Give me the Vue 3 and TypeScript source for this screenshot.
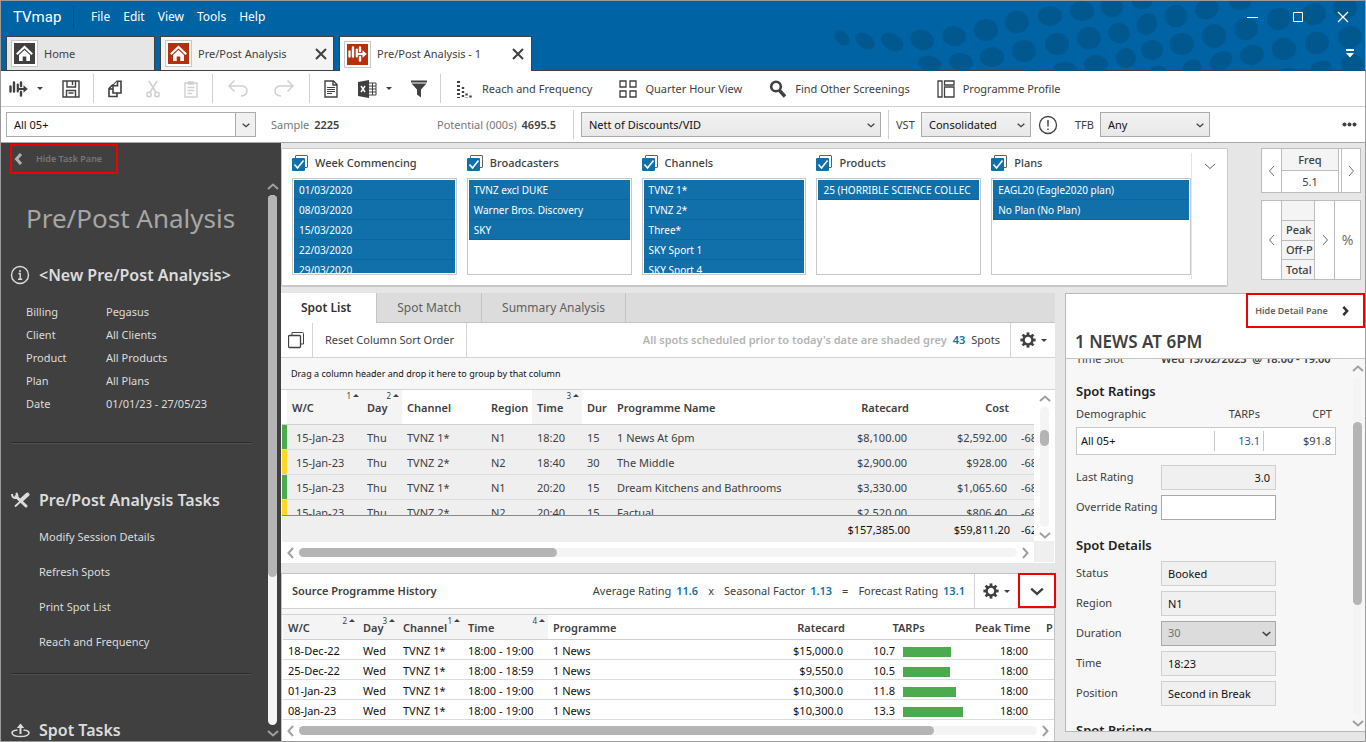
<script setup lang="ts">
import { h, ref } from 'vue'

type Dir = 'up' | 'down' | 'left' | 'right'

const chevronPaths: Record<Dir, string> = {
  up: 'M1 8 L6 3.5 L11 8',
  down: 'M1 4 L6 8.5 L11 4',
  left: 'M8 1 L3.5 6 L8 11',
  right: 'M4 1 L8.5 6 L4 11',
}

const Chevron = (props: { dir: Dir; size?: number; weight?: number }) =>
  h('svg', { width: props.size ?? 12, height: props.size ?? 12, viewBox: '0 0 12 12', 'aria-hidden': 'true' }, [
    h('path', { d: chevronPaths[props.dir], fill: 'none', stroke: 'currentColor', 'stroke-width': props.weight ?? 2 }),
  ])
Chevron.props = ['dir', 'size', 'weight']

const Gear = () =>
  h('svg', { width: 16, height: 16, viewBox: '-8 -8 16 16', 'aria-hidden': 'true' }, [
    h('circle', { r: 4.4, fill: 'none', stroke: 'currentColor', 'stroke-width': 2.4 }),
    ...[0, 45, 90, 135, 180, 225, 270, 315].map((a) =>
      h('rect', { x: -1.4, y: -7.6, width: 2.8, height: 3, fill: 'currentColor', transform: `rotate(${a})` }),
    ),
  ])

const SpotsIcon = () =>
  h('svg', { width: 19, height: 18, viewBox: '0 0 19 18', fill: 'none', stroke: 'currentColor', 'aria-hidden': 'true' }, [
    h('path', { d: 'M1.5 6.5 V11.5 M5 2.5 V11.5', 'stroke-width': 2.4, 'stroke-linecap': 'round' }),
    h('path', { d: 'M8.8 4.5 V11.5', 'stroke-width': 2.2, 'stroke-linecap': 'round' }),
    h('path', { d: 'M12 2.5 V6 M12 12 V15.5', 'stroke-width': 2.4, 'stroke-linecap': 'round' }),
    h('path', { d: 'M8.5 9 H16', 'stroke-width': 2.2 }),
    h('path', { d: 'M14.5 5.2 L18.8 9 L14.5 12.8 Z', fill: 'currentColor', stroke: 'none' }),
  ])

const HomeIcon = () =>
  h('svg', { width: 19, height: 19, viewBox: '0 0 19 19', 'aria-hidden': 'true' }, [
    h('path', { d: 'M1.8 10.2 L9.5 3 L17.2 10.2', fill: 'none', stroke: '#fff', 'stroke-width': 2.2 }),
    h('path', { d: 'M4 11 L9.5 6 L15 11 V17 H11.3 V12.5 H7.7 V17 H4 Z', fill: '#fff' }),
  ])

const menus = ['File', 'Edit', 'View', 'Tools', 'Help']

const dots: number[][] = [
  [843, 37, 9, 6, 45], [866, 40, 11, 7, 35], [893, 41, 12, 8, 30], [923, 39, 12, 10, 20], [955, 35, 12, 10, 10],
  [987, 29, 12, 11, 0], [1018, 21, 12, 11, 0], [1051, 15, 12, 10, 0], [1083, 10, 12, 10, 0], [1113, 6, 11, 10, 20],
  [1143, 1, 10, 7, 0], [931, 63, 12, 8, 15], [962, 61, 12, 9, 10], [993, 56, 12, 10, 0], [1025, 50, 12, 11, 0],
  [1058, 43, 12, 11, 0], [1090, 37, 12, 11, 0], [1120, 32, 11, 10, 20], [1148, 23, 10, 11, 30], [1177, 15, 11, 11, 0],
  [1208, 8, 12, 10, -20], [1241, 1, 11, 8, 0], [1066, 69, 12, 8, 0], [1097, 64, 12, 10, 0], [1127, 57, 10, 10, 0],
  [1153, 49, 11, 10, 0], [1183, 43, 12, 11, 0], [1215, 35, 12, 12, 0], [1247, 28, 12, 11, -15], [1280, 18, 12, 11, -15],
  [1315, 13, 12, 11, -15], [1346, 7, 12, 11, 0], [1159, 70, 9, 5, 0], [1193, 67, 10, 8, -30], [1222, 60, 12, 9, -30],
  [1253, 54, 12, 10, -15], [1285, 48, 12, 11, 0], [1318, 42, 12, 11, -15], [1351, 36, 12, 11, -15],
  [1322, 68, 11, 8, -15], [1353, 63, 11, 10, 0], [1290, 71, 10, 4, 0], [1033, 71, 8, 3, 0],
]

const facts = [
  ['Billing', 'Pegasus'],
  ['Client', 'All Clients'],
  ['Product', 'All Products'],
  ['Plan', 'All Plans'],
  ['Date', '01/01/23 - 27/05/23'],
]
const tasks = ['Modify Session Details', 'Refresh Spots', 'Print Spot List', 'Reach and Frequency']

const filters = [
  { title: 'Week Commencing', items: ['01/03/2020', '08/03/2020', '15/03/2020', '22/03/2020', '29/03/2020'] },
  { title: 'Broadcasters', items: ['TVNZ excl DUKE', 'Warner Bros. Discovery', 'SKY'] },
  { title: 'Channels', items: ['TVNZ 1*', 'TVNZ 2*', 'Three*', 'SKY Sport 1', 'SKY Sport 4'] },
  { title: 'Products', items: ['25 (HORRIBLE SCIENCE COLLEC'] },
  { title: 'Plans', items: ['EAGL20 (Eagle2020 plan)', 'No Plan (No Plan)'] },
]

const spots = [
  { tone: 'green', wc: '15-Jan-23', day: 'Thu', channel: 'TVNZ 1*', region: 'N1', time: '18:20', dur: '15', name: '1 News At 6pm', rate: '$8,100.00', cost: '$2,592.00', disc: '-68' },
  { tone: 'yellow', wc: '15-Jan-23', day: 'Thu', channel: 'TVNZ 2*', region: 'N2', time: '18:40', dur: '30', name: 'The Middle', rate: '$2,900.00', cost: '$928.00', disc: '-68' },
  { tone: 'green', wc: '15-Jan-23', day: 'Thu', channel: 'TVNZ 1*', region: 'N1', time: '20:20', dur: '15', name: 'Dream Kitchens and Bathrooms', rate: '$3,330.00', cost: '$1,065.60', disc: '-68' },
  { tone: 'yellow', wc: '15-Jan-23', day: 'Thu', channel: 'TVNZ 2*', region: 'N2', time: '20:40', dur: '15', name: 'Factual', rate: '$2,520.00', cost: '$806.40', disc: '-68' },
]

const history = [
  { wc: '18-Dec-22', time: '18:00 - 19:00', rate: '$15,000.0', tarps: 10.7 },
  { wc: '25-Dec-22', time: '18:00 - 18:59', rate: '$9,550.0', tarps: 10.5 },
  { wc: '01-Jan-23', time: '18:00 - 19:00', rate: '$10,300.0', tarps: 11.8 },
  { wc: '08-Jan-23', time: '18:00 - 19:00', rate: '$10,300.0', tarps: 13.3 },
]
const barWidth = (tarps: number) => `${Math.round(tarps * 4.5)}px`

const override = ref('')
</script>

<template>
  <div class="window">
    <header class="titlebar">
      <svg class="dots" width="536" height="70" viewBox="830 0 536 70" aria-hidden="true">
        <ellipse v-for="(d, i) in dots" :key="i" :cx="d[0]" :cy="d[1]" :rx="d[2]" :ry="d[3]" :transform="`rotate(${d[4]} ${d[0]} ${d[1]})`" fill="#00588f" />
      </svg>
      <div class="menurow">
        <span class="brand">TVmap</span>
        <nav class="menus">
          <button v-for="m in menus" :key="m" type="button">{{ m }}</button>
        </nav>
        <div class="winbtns">
          <button type="button" aria-label="Minimise">
            <svg width="12" height="12" viewBox="0 0 12 12"><path d="M0 6.5 H11" stroke="#fff" /></svg>
          </button>
          <button type="button" aria-label="Maximise">
            <svg width="12" height="12" viewBox="0 0 12 12"><path d="M1.5 1.5 H10.5 V10.5 H1.5 Z" fill="none" stroke="#fff" /></svg>
          </button>
          <button type="button" aria-label="Close">
            <svg width="12" height="12" viewBox="0 0 12 12"><path d="M1 1 L11 11 M11 1 L1 11" stroke="#fff" stroke-width="1.3" /></svg>
          </button>
        </div>
      </div>
      <div class="tabrow">
        <div class="tab home">
          <span class="tabicon dark"><HomeIcon /></span><span class="tabname">Home</span>
        </div>
        <div class="tab second">
          <span class="tabicon"><HomeIcon /></span><span class="tabname">Pre/Post Analysis</span>
          <button type="button" aria-label="Close tab">
            <svg width="12" height="12" viewBox="0 0 12 12"><path d="M1 1 L11 11 M11 1 L1 11" stroke="#404040" stroke-width="2" /></svg>
          </button>
        </div>
        <div class="tab third">
          <span class="tabicon"><SpotsIcon /></span><span class="tabname">Pre/Post Analysis - 1</span>
          <button type="button" aria-label="Close tab">
            <svg width="12" height="12" viewBox="0 0 12 12"><path d="M1 1 L11 11 M11 1 L1 11" stroke="#404040" stroke-width="2" /></svg>
          </button>
        </div>
        <button class="tabmore" type="button" aria-label="More tabs">
          <svg width="8" height="9" viewBox="0 0 8 9"><path d="M0 0 H8 V2 H0 Z M0 4 H8 L4 8.5 Z" fill="#fff" /></svg>
        </button>
      </div>
    </header>

    <div class="toolbar">
      <button class="split" type="button" aria-label="Spots"><SpotsIcon /><i class="caret"></i></button>
      <button class="w40" type="button" aria-label="Save">
        <svg width="18" height="18" viewBox="0 0 18 18" fill="none" stroke="#404040" stroke-width="1.4"><path d="M1 1 H17 V17 H1 Z M5 1 V7 H13.5 V1 M10.5 1 V5 M4.5 17 V10.5 H13.5 V17 M6.5 13 H11.5" /></svg>
      </button>
      <i class="sep"></i>
      <button class="w38" type="button" aria-label="Copy">
        <svg width="14" height="18" viewBox="0 0 14 18" fill="#fff" stroke="#404040" stroke-width="1.6"><path d="M1 8.5 L4.500 5 H9 V16.5 H1 Z" /><path d="M5 5.500 L9 1.2 H13 V13 H5 Z" /><path d="M9.5 1 V5.700 H5" /><path d="M1 9 H4.500" /></svg>
      </button>
      <button class="w38" type="button" aria-label="Cut">
        <svg width="14" height="18" viewBox="0 0 14 18" fill="none" stroke="#d0d0d0" stroke-width="1.5"><path d="M3 1 L10 12.5 M11 1 L4 12.5" /><circle cx="3" cy="14.5" r="2.2" /><circle cx="11" cy="14.5" r="2.2" /></svg>
      </button>
      <button class="w38" type="button" aria-label="Paste">
        <svg width="14" height="18" viewBox="0 0 14 18" fill="none" stroke="#d0d0d0" stroke-width="1.4"><path d="M1 3 H13 V17 H1 Z" /><path d="M4 3 H10" stroke-width="3.4" /><path d="M3.5 7.5 H10.5 M3.5 10.5 H10.5 M3.5 13.5 H8" /></svg>
      </button>
      <i class="sep"></i>
      <button class="w46" type="button" aria-label="Undo">
        <svg width="20" height="17" viewBox="0 0 20 17" fill="none" stroke="#d0d0d0" stroke-width="1.5"><path d="M6.5 0.5 L1 6 L6.5 11.5 M1 6 H14 Q19 6.5 19 11 Q19 15.5 13 16" /></svg>
      </button>
      <button class="w46" type="button" aria-label="Redo">
        <svg width="20" height="17" viewBox="0 0 20 17" fill="none" stroke="#d0d0d0" stroke-width="1.5"><path d="M13.5 0.5 L19 6 L13.5 11.5 M19 6 H6 Q1 6.5 1 11 Q1 15.5 7 16" /></svg>
      </button>
      <i class="sep"></i>
      <button class="w38" type="button" aria-label="Report">
        <svg width="14" height="18" viewBox="0 0 14 18" fill="none" stroke="#404040" stroke-width="1.4"><path d="M1 1 H9.5 L13 4.5 V17 H1 Z M9 1 V5 H13" /><path d="M3 7.5 H11 M3 9.5 H11 M3 11.5 H11 M3 13.5 H8" stroke-width="1" /></svg>
      </button>
      <button class="split" type="button" aria-label="Export to Excel">
        <svg width="19" height="18" viewBox="0 0 19 18"><path d="M0 2 L11 0 V18 L0 16 Z" fill="#404040" /><path d="M3 6 L7 12 M7 6 L3 12" stroke="#fff" stroke-width="1.4" /><path d="M11 3 H18 V15 H11 M11 6 H18 M11 9 H18 M11 12 H18 M14.5 3 V15" fill="none" stroke="#404040" /></svg>
        <i class="caret"></i>
      </button>
      <button class="w38" type="button" aria-label="Filter">
        <svg width="16" height="18" viewBox="0 0 16 18" fill="#404040"><path d="M0 0.5 H16 V2.5 H0 Z M0.5 3.5 H15.5 L10 9.5 V17.5 L6 14.5 V9.5 Z" /></svg>
      </button>
      <i class="sep"></i>
      <button class="labelled" type="button">
        <svg width="18" height="18" viewBox="0 0 18 18" stroke="#404040" fill="none"><path d="M2.5 1 V18" stroke-width="3" stroke-dasharray="2 2" /><path d="M7 6 V18" stroke-width="2.4" stroke-dasharray="2 2" stroke-dashoffset="-1" /><path d="M10.5 13.5 V18 M14.5 15.5 V18" stroke-width="2.4" stroke-dasharray="2 2" /></svg>
        Reach and Frequency
      </button>
      <button class="labelled" type="button">
        <svg width="18" height="18" viewBox="0 0 18 18" stroke="#404040" fill="none" stroke-width="1.3"><path d="M1 1 H7 V7 H1 Z M11 1 H17 V7 H11 Z M1 11 H7 V17 H1 Z M11 11 H17 V17 H11 Z" /></svg>
        Quarter Hour View
      </button>
      <button class="labelled" type="button">
        <svg width="18" height="18" viewBox="0 0 18 18" stroke="#404040" fill="none"><circle cx="7" cy="6.5" r="4.8" stroke-width="2.6" /><path d="M10.5 10.5 L16 16.5" stroke-width="3.4" /></svg>
        Find Other Screenings
      </button>
      <button class="labelled" type="button">
        <svg width="18" height="18" viewBox="0 0 18 18" stroke="#404040" fill="none" stroke-width="1.3"><path d="M1 1 H5 V17 H1 Z M7.5 1 H17 V5 H7.5 Z M7.5 7 H17 V17 H7.5 Z" /></svg>
        Programme Profile
      </button>
    </div>

    <div class="criteria">
      <label class="pick demo">
        <select aria-label="Demographic"><option>All 05+</option></select>
        <span class="arrow"><Chevron dir="down" :size="8" /></span>
      </label>
      <span class="sample">Sample <b>2225</b></span>
      <span class="potential">Potential (000s) <b>4695.5</b></span>
      <i class="csep"></i>
      <label class="pick nett">
        <select aria-label="Rate basis"><option>Nett of Discounts/VID</option></select>
        <span class="arrow"><Chevron dir="down" :size="8" /></span>
      </label>
      <i class="csep"></i>
      <label class="clabel" for="vst">VST</label>
      <span class="pick small">
        <select id="vst"><option>Consolidated</option></select>
        <span class="arrow"><Chevron dir="down" :size="8" /></span>
      </span>
      <svg class="bang" width="20" height="20" viewBox="0 0 20 20" fill="none" stroke="#404040"><circle cx="10" cy="10" r="8.5" stroke-width="1.3" /><path d="M10 5 V11.5 M10 13.5 V15" stroke-width="1.4" /></svg>
      <label class="clabel" for="tfb">TFB</label>
      <span class="pick small">
        <select id="tfb"><option>Any</option></select>
        <span class="arrow"><Chevron dir="down" :size="8" /></span>
      </span>
      <button class="more" type="button" aria-label="More">
        <svg width="15" height="5" viewBox="0 0 15 5" fill="#404040"><circle cx="2.5" cy="2.5" r="2" /><circle cx="7.5" cy="2.5" r="2" /><circle cx="12.5" cy="2.5" r="2" /></svg>
      </button>
    </div>

    <div class="workspace">
      <aside class="taskpane">
        <button class="hidetask" type="button"><Chevron dir="left" :weight="3" />Hide Task Pane</button>
        <div class="taskscroll">
          <div class="taskbody">
            <h1>Pre/Post Analysis</h1>
            <h2 class="session">
              <svg width="20" height="20" viewBox="0 0 20 20" fill="none" stroke="#dcdcdc"><circle cx="10" cy="10" r="8.5" stroke-width="1.4" /><path d="M10 5 V7 M8.5 8.5 H10.2 V14 M8 14.2 H12.2" stroke-width="1.4" /></svg>
              &lt;New Pre/Post Analysis&gt;
            </h2>
            <dl>
              <div v-for="f in facts" :key="f[0]"><dt>{{ f[0] }}</dt><dd>{{ f[1] }}</dd></div>
            </dl>
            <hr />
            <h2 class="tasks">
              <svg width="19" height="17" viewBox="0 0 19 17" fill="none" stroke="#dcdcdc"><path d="M5 4.5 L15 14" stroke-width="3" stroke-linecap="round" /><path d="M1 2 Q1 6.5 5.5 6 Q7.5 3.5 5 1" stroke-width="2" /><path d="M11 7.5 L16.5 2.5" stroke-width="4" stroke-linecap="round" /><path d="M11 8 L4 14.5" stroke-width="1.8" /></svg>
              Pre/Post Analysis Tasks
            </h2>
            <ul>
              <li v-for="t in tasks" :key="t"><a href="#">{{ t }}</a></li>
            </ul>
            <hr class="lower" />
            <h2 class="spottasks">
              <svg width="19" height="15" viewBox="0 0 19 15" fill="none" stroke="#dcdcdc"><path d="M6.5 7 Q1 7.5 1 10 Q1.5 13.5 9.5 13.5 Q17.5 13.5 18 10 Q18 7.5 12.5 7" stroke-width="1.6" /><path d="M9.5 11 V3" stroke-width="2" /><path d="M5.8 5 L9.5 0.5 L13.2 5 Z" fill="#dcdcdc" stroke="none" /></svg>
              Spot Tasks
            </h2>
          </div>
          <div class="vbar dark">
            <Chevron dir="up" />
            <div class="track"><div class="thumb taskthumb"></div></div>
            <Chevron dir="down" />
          </div>
        </div>
      </aside>

      <main class="content">
        <div class="toprow">
          <section class="filterpanel">
            <div class="lists">
              <div v-for="f in filters" :key="f.title" class="filter">
                <label class="fhead">
                  <span class="stack">
                    <i></i><input type="checkbox" checked />
                    <svg width="14" height="14" viewBox="0 0 14 14" fill="none" stroke="#fff" stroke-width="1.6"><path d="M2.5 7.5 L5.5 11 L11.5 3.5" /></svg>
                  </span>
                  {{ f.title }}
                </label>
                <ul><li v-for="i in f.items" :key="i">{{ i }}</li></ul>
              </div>
            </div>
            <button class="expand" type="button" aria-label="Expand filters"><Chevron dir="down" :weight="1" /></button>
          </section>
          <div class="minis">
            <div class="mini freq">
              <button type="button" aria-label="Previous"><Chevron dir="left" :weight="1" /></button>
              <table><tbody><tr><th>Freq</th></tr><tr><td>5.1</td></tr></tbody></table>
              <i></i>
              <button type="button" aria-label="Next"><Chevron dir="right" :weight="1" /></button>
            </div>
            <div class="mini split4">
              <button type="button" aria-label="Previous"><Chevron dir="left" :weight="1" /></button>
              <table><tbody><tr><th></th></tr><tr><th>Peak</th></tr><tr><th>Off-P</th></tr><tr><th>Total</th></tr></tbody></table>
              <button type="button" aria-label="Next"><Chevron dir="right" :weight="1" /></button>
              <button class="pct" type="button">%</button>
            </div>
          </div>
        </div>

        <div class="bottomrow">
          <div class="center">
            <section class="spotpanel">
              <div class="tabs" role="tablist">
                <button type="button" role="tab" class="on">Spot List</button>
                <button type="button" role="tab">Spot Match</button>
                <button type="button" role="tab">Summary Analysis</button>
              </div>
              <div class="spotbar">
                <button class="stackbtn" type="button" aria-label="Select all">
                  <svg width="17" height="17" viewBox="0 0 17 17" fill="#fff" stroke="#404040"><path d="M4 0.5 H14.5 Q15.5 0.5 15.5 1.5 V12 H4 Z" /><rect x="0.5" y="3.5" width="12" height="12" rx="1" stroke-width="1.3" /></svg>
                </button>
                <button class="reset" type="button">Reset Column Sort Order</button>
                <span class="note">All spots scheduled prior to today's date are shaded grey</span>
                <b class="num">43</b><span class="unit">Spots</span>
                <button class="gear" type="button" aria-label="Settings"><Gear /><i class="caret"></i></button>
              </div>
              <div class="groupbar">Drag a column header and drop it here to group by that column</div>
              <div class="gridarea">
                <div class="gridmain">
                  <div class="gridclip">
                    <table class="spots">
                      <colgroup><col class="c5" /><col class="c75" /><col class="c40" /><col class="c84" /><col class="c46" /><col class="c50" /><col class="c30" /><col /><col class="c100" /><col class="c100" /><col class="c20" /></colgroup>
                      <thead>
                        <tr>
                          <th></th>
                          <th class="sorted">W/C<small>1<i></i></small></th>
                          <th class="sorted">Day<small>2<i></i></small></th>
                          <th>Channel</th><th>Region</th>
                          <th class="sorted">Time<small>3<i></i></small></th>
                          <th>Dur</th><th>Programme Name</th><th class="r">Ratecard</th><th class="r">Cost</th><th></th>
                        </tr>
                      </thead>
                      <tbody>
                        <tr v-for="(s, i) in spots" :key="i">
                          <td :class="s.tone"></td><td class="wc">{{ s.wc }}</td><td>{{ s.day }}</td><td>{{ s.channel }}</td><td>{{ s.region }}</td><td>{{ s.time }}</td><td>{{ s.dur }}</td><td>{{ s.name }}</td><td class="r">{{ s.rate }}</td><td class="r">{{ s.cost }}</td><td class="last">{{ s.disc }}</td>
                        </tr>
                      </tbody>
                      <tfoot>
                        <tr><td colspan="8"></td><td class="r">$157,385.00</td><td class="r">$59,811.20</td><td class="last">-62</td></tr>
                      </tfoot>
                    </table>
                  </div>
                  <div class="hbar">
                    <Chevron dir="left" />
                    <div class="track"><div class="thumb spotthumb"></div></div>
                    <Chevron dir="right" />
                  </div>
                </div>
                <div class="gridside">
                  <div class="vbar">
                    <Chevron dir="up" />
                    <div class="track"><div class="thumb gridthumb"></div></div>
                    <Chevron dir="down" />
                  </div>
                  <div class="corner"></div>
                </div>
              </div>
            </section>

            <section class="histpanel">
              <div class="histbar">
                <h3>Source Programme History</h3>
                <span>Average Rating <b>11.6</b></span><span class="op">x</span>
                <span>Seasonal Factor <b>1.13</b></span><span class="op">=</span>
                <span>Forecast Rating <b>13.1</b></span>
                <button class="gear" type="button" aria-label="Settings"><Gear /><i class="caret"></i></button>
                <button class="collapse" type="button" aria-label="Collapse history"><Chevron dir="down" :size="14" :weight="2" /></button>
              </div>
              <div class="strip"></div>
              <table class="hist">
                <colgroup><col class="c75" /><col class="c40" /><col class="c65" /><col class="c85" /><col /><col class="c100" /><col class="c120" /><col class="c65" /><col class="c19" /></colgroup>
                <thead>
                  <tr>
                    <th class="sorted">W/C<small>2<i></i></small></th>
                    <th class="sorted">Day<small>3<i></i></small></th>
                    <th class="sorted">Channel<small>1<i></i></small></th>
                    <th class="sorted">Time<small>4<i></i></small></th>
                    <th>Programme</th><th class="r">Ratecard</th><th class="c">TARPs</th><th class="r">Peak Time</th><th class="peak">P</th>
                  </tr>
                </thead>
                <tbody>
                  <tr v-for="r in history" :key="r.wc">
                    <td>{{ r.wc }}</td><td>Wed</td><td>TVNZ 1*</td><td>{{ r.time }}</td><td>1 News</td><td class="r">{{ r.rate }}</td>
                    <td class="tarps"><span>{{ r.tarps.toFixed(1) }}</span><i :style="{ width: barWidth(r.tarps) }"></i></td>
                    <td class="r">18:00</td><td></td>
                  </tr>
                </tbody>
              </table>
              <div class="hbar">
                <Chevron dir="left" />
                <div class="track"><div class="thumb histthumb"></div></div>
                <Chevron dir="right" />
              </div>
            </section>
          </div>

          <aside class="detail">
            <div class="dhead">
              <button class="hidedetail" type="button">Hide Detail Pane<Chevron dir="right" :size="10" :weight="3" /></button>
              <h2>1 NEWS AT 6PM</h2>
            </div>
            <div class="dscroll">
              <div class="dbody">
                <div class="slot"><span>Time Slot</span><b>Wed 15/02/2023&nbsp; @ 18:00 - 19:00</b></div>
                <h3>Spot Ratings</h3>
                <table class="ratings">
                  <thead><tr><th>Demographic</th><th class="r">TARPs</th><th class="r">CPT</th></tr></thead>
                  <tbody><tr><td>All 05+</td><td class="r"><span class="blue">13.1</span></td><td class="r">$91.8</td></tr></tbody>
                </table>
                <div class="field"><label for="last">Last Rating</label><input id="last" class="num" value="3.0" readonly /></div>
                <div class="field"><label for="over">Override Rating</label><input id="over" v-model="override" class="edit" /></div>
                <h3 class="sd">Spot Details</h3>
                <div class="field"><label for="status">Status</label><input id="status" value="Booked" readonly /></div>
                <div class="field"><label for="region">Region</label><input id="region" value="N1" readonly /></div>
                <div class="field">
                  <label for="dur">Duration</label>
                  <span class="pick dur"><select id="dur" disabled><option>30</option></select><span class="arrow"><Chevron dir="down" :size="9" :weight="2" /></span></span>
                </div>
                <div class="field"><label for="time">Time</label><input id="time" value="18:23" readonly /></div>
                <div class="field"><label for="pos">Position</label><input id="pos" value="Second in Break" readonly /></div>
                <h3 class="sp">Spot Pricing</h3>
              </div>
              <div class="vbar">
                <Chevron dir="up" />
                <div class="track"><div class="thumb detailthumb"></div></div>
                <Chevron dir="down" />
              </div>
            </div>
          </aside>
        </div>
      </main>
    </div>
  </div>
</template>

<style>
body {
  margin: 0;
  overflow: hidden;
}
</style>

<style scoped>
* {
  box-sizing: border-box;
}
.window {
  display: flex;
  flex-direction: column;
  height: 100vh;
  border: 1px solid #9a9a9a;
  background: #e6e6e6;
  color: #404040;
  font-family: "Noto Sans", "Open Sans", sans-serif;
  font-size: 11px;
  line-height: 16px;
  overflow: hidden;
}
button,
input,
select {
  font: inherit;
  color: inherit;
}
button {
  display: flex;
  align-items: center;
  justify-content: center;
  padding: 0;
  border: 0;
  background: none;
  white-space: nowrap;
}
svg {
  flex: none;
}
h1,
h2,
h3,
ul,
dl,
dd {
  margin: 0;
  padding: 0;
}
ul {
  list-style: none;
}
b,
th {
  font-weight: 600;
}

/* title bar */
.titlebar {
  position: relative;
  flex: none;
  background: #0063a3;
  border-bottom: 1px solid #404040;
}
.dots {
  position: absolute;
  right: 0;
  top: 0;
}
.menurow {
  position: relative;
  display: flex;
  align-items: center;
  height: 32px;
  color: #fff;
}
.brand {
  width: 61px;
  margin-left: 12px;
  border-right: 1px solid #00508a;
  font-family: Roboto, sans-serif;
  font-size: 15px;
  line-height: 22px;
}
.menus {
  display: flex;
  gap: 13px;
  margin-left: 17px;
  flex: 1;
  font-size: 12px;
}
.winbtns {
  display: flex;
  gap: 33px;
  margin-right: 16px;
}
.tabrow {
  position: relative;
  display: flex;
  align-items: flex-end;
  height: 37px;
  padding-left: 5px;
}
.tab {
  display: flex;
  align-items: center;
  height: 34px;
  margin-right: 5px;
  padding: 0 6px 0 4px;
  border: 1px solid #404040;
  border-bottom: 0;
  background: #f4f4f4;
}
.tab.home {
  width: 149px;
  background: #e6e6e6;
}
.tab.second {
  width: 174px;
}
.tab.third {
  width: 193px;
  padding-right: 7px;
  background: #fff;
  margin-bottom: -1px;
  height: 35px;
}
.tabicon {
  display: flex;
  align-items: center;
  justify-content: center;
  width: 27px;
  height: 27px;
  border: 1px solid #c8c8c8;
  background: #b5310d;
  color: #fff;
  box-shadow: inset 0 0 0 2px #fff;
}
.tabicon.dark {
  background: #404040;
}
.tabname {
  flex: 1;
  margin-left: 6px;
}
.tabmore {
  margin: 0 11px 12px auto;
}

/* toolbar */
.toolbar {
  display: flex;
  align-items: center;
  flex: none;
  height: 36px;
  background: #fff;
  border-bottom: 1px solid #d0d0d0;
}
.toolbar button {
  height: 32px;
}
.split {
  width: 50px;
  gap: 9px;
}
.caret {
  border: 3px solid transparent;
  border-top: 3px solid #404040;
  border-bottom: 0;
}
.w38 {
  width: 38px;
}
.w40 {
  width: 40px;
}
.w46 {
  width: 46px;
}
.sep {
  width: 1px;
  height: 29px;
  margin: 0 2px;
  background: #d0d0d0;
}
.labelled {
  gap: 8px;
  padding: 0 14px 0 13px;
}

/* criteria row */
.criteria {
  display: flex;
  align-items: center;
  flex: none;
  height: 36px;
  padding: 0 8px 0 5px;
  background: #fff;
  border-bottom: 1px solid #a8a8a8;
}
.pick {
  position: relative;
  display: block;
}
.pick select {
  width: 100%;
  height: 25px;
  padding: 0 7px;
  border: 1px solid #ababab;
  border-radius: 0;
  background: linear-gradient(#f2f2f2, #e8e8e8);
  color: #111;
  appearance: none;
}
.arrow {
  position: absolute;
  top: 1px;
  right: 0;
  bottom: 1px;
  display: flex;
  align-items: center;
  justify-content: center;
  width: 20px;
  pointer-events: none;
}
.pick.demo {
  width: 250px;
}
.demo select {
  background: #fff;
}
.demo .arrow {
  right: 1px;
  border-left: 1px solid #ababab;
  background: #f0f0f0;
}
.nett {
  width: 300px;
}
.small {
  width: 110px;
}
.sample,
.potential {
  color: #777;
}
.sample {
  width: 166px;
  margin-left: 15px;
}
.potential {
  width: 136px;
}
.sample b,
.potential b {
  margin-left: 2px;
  color: #404040;
}
.csep {
  width: 1px;
  height: 29px;
  margin-right: 7px;
  background: #d0d0d0;
}
.nett + .csep {
  margin-left: 7px;
}
.clabel {
  width: 25px;
}
.bang {
  margin: 0 17px 0 7px;
}
.more {
  margin-left: auto;
}

/* workspace */
.workspace {
  display: flex;
  flex: 1;
  min-height: 0;
}
.taskpane {
  display: flex;
  flex-direction: column;
  flex: none;
  width: 280px;
  background: #404040;
  color: #dcdcdc;
}
.hidetask {
  justify-content: flex-start;
  gap: 11px;
  width: 108px;
  height: 30px;
  margin: 1px 0 0 9px;
  padding-left: 1px;
  border: 2px solid #f00000;
  color: #777;
  font-size: 9px;
  font-weight: 600;
}
.hidetask svg {
  color: #b0b0b0;
}
.taskscroll {
  display: flex;
  flex: 1;
  min-height: 0;
}
.taskbody {
  flex: 1;
  padding-left: 10px;
  overflow: hidden;
}
.taskbody h1 {
  margin: 26px 0 0 15px;
  color: #a6a6a6;
  font-size: 26px;
  line-height: 36px;
  font-weight: 400;
  white-space: nowrap;
}
.taskbody h2 {
  display: flex;
  align-items: center;
  gap: 9px;
  height: 24px;
  font-size: 16px;
  font-weight: 600;
  white-space: nowrap;
}
.taskbody .session {
  margin-top: 27px;
  margin-left: -1px;
}
dl {
  margin: 13px 0 0 15px;
}
dl div {
  display: flex;
  height: 23px;
  align-items: center;
}
dt {
  width: 80px;
}
hr {
  width: 240px;
  height: 2px;
  margin: 27px 0 44px;
  border: 0;
  border-top: 1px solid #2b2b2b;
  border-bottom: 1px solid #505050;
}
.taskbody ul {
  margin: 7px 0 0 28px;
}
.taskbody li {
  display: flex;
  align-items: center;
  height: 35px;
}
.taskbody a {
  color: inherit;
  text-decoration: none;
}
hr.lower {
  margin: 14px 0 43px;
}

/* scrollbars */
.vbar {
  display: flex;
  flex-direction: column;
  align-items: center;
  gap: 2px;
  flex: none;
  width: 13px;
  color: #a0a0a0;
}
.track {
  border-radius: 5px;
  background: #f4f4f4;
}
.vbar .track {
  flex: 1;
  width: 9px;
}
.thumb {
  border-radius: 5px;
  background: #b4b4b4;
}
.vbar.dark {
  margin: 7px 2px 2px 0;
}
.taskthumb {
  height: 72%;
}
.hbar {
  display: flex;
  align-items: center;
  gap: 2px;
  height: 21px;
  padding: 0 3px;
  color: #a0a0a0;
}
.hbar .track {
  flex: 1;
}
.hbar .thumb {
  height: 9px;
}

/* content */
.content {
  display: flex;
  flex-direction: column;
  flex: 1;
  min-width: 0;
}
.toprow {
  display: flex;
  align-items: flex-start;
  gap: 33px;
  padding: 5px 4px 0 0;
}
.filterpanel {
  display: flex;
  flex: 1;
  min-width: 0;
  height: 139px;
  border: 1px solid #c8c8c8;
  border-bottom-width: 2px;
  border-radius: 2px;
  background: #fff;
}
.lists {
  display: grid;
  grid-template-columns: repeat(4, minmax(0, 33fr)) minmax(0, 40fr);
  gap: 10px;
  flex: 1;
  margin: 4px 0 6px;
  padding-left: 10px;
  border-right: 1px solid #e4e4e4;
}
.filter {
  min-width: 0;
}
.fhead {
  display: flex;
  align-items: center;
  gap: 7px;
  height: 20px;
  font-weight: 500;
}
.stack {
  position: relative;
  width: 16px;
  height: 16px;
}
.stack i {
  position: absolute;
  right: 0;
  top: 0;
  width: 13px;
  height: 13px;
  border: 1px solid #606060;
  border-radius: 1px;
}
.stack input {
  position: absolute;
  left: 0;
  bottom: 0;
  width: 13px;
  height: 13px;
  margin: 0;
  border-radius: 1px;
  background: #1170aa;
  appearance: none;
}
.stack svg {
  position: absolute;
  left: 0;
  bottom: 0;
}
.filter ul {
  display: flex;
  flex-direction: column;
  height: 97px;
  margin-top: 5px;
  padding: 1px;
  border: 1px solid #c8c8c8;
  overflow: clip;
  overflow-clip-margin: content-box;
}
.filter li {
  flex: none;
  height: 20px;
  padding: 0 5px;
  border-bottom: 1px solid #0b66a0;
  background: #1170aa;
  color: #fff;
  font-size: 10px;
  line-height: 20px;
  white-space: nowrap;
}
.expand {
  width: 35px;
  height: 34px;
  color: #606060;
}
.minis {
  display: flex;
  flex-direction: column;
  gap: 7px;
  width: 100px;
}
.mini {
  display: flex;
  border: 1px solid #bcbcbc;
  background: #fff;
}
.mini button {
  flex: none;
  width: 19px;
  color: #707070;
}
.mini table {
  flex: 1;
  table-layout: fixed;
  width: 0;
  border-collapse: collapse;
  border-left: 1px solid #bcbcbc;
  border-right: 1px solid #bcbcbc;
}
.mini th,
.mini td {
  padding: 0;
  text-align: center;
  white-space: nowrap;
  overflow: hidden;
}
.mini th {
  background: #f4f4f4;
  font-weight: 500;
}
.mini tr + tr > * {
  border-top: 1px solid #bcbcbc;
}
.freq {
  height: 45px;
}
.freq > i {
  width: 2px;
}
.freq button:last-child {
  border-left: 1px solid #bcbcbc;
}
.split4 {
  height: 80px;
}
.split4 th {
  height: 18px;
  padding-left: 4px;
  text-align: left;
  text-overflow: clip;
}
.split4 .pct {
  width: 26px;
  border-left: 1px solid #bcbcbc;
  font-size: 14px;
}

.bottomrow {
  display: flex;
  gap: 10px;
  flex: 1;
  min-height: 0;
  margin-top: 6px;
}
.center {
  display: flex;
  flex-direction: column;
  gap: 10px;
  flex: 1;
  min-width: 0;
}
.spotpanel {
  display: flex;
  flex-direction: column;
  flex: 1;
  min-height: 0;
  background: #fff;
}
.tabs {
  display: flex;
  flex: none;
  height: 30px;
  background: #dcdcdc;
  border-bottom: 1px solid #c4c4c4;
}
.tabs button {
  padding: 0 20px;
  border-right: 1px solid #c4c4c4;
  font-size: 12px;
  color: #606060;
}
.tabs .on {
  height: 30px;
  padding: 0 25px 0 20px;
  background: #fff;
  color: #303030;
  font-weight: 600;
}
.spotbar {
  display: flex;
  flex: none;
  align-items: center;
  height: 35px;
  border-bottom: 1px solid #d4d4d4;
}
.spotbar button {
  height: 34px;
}
.stackbtn {
  width: 32px;
  border-right: 1px solid #d4d4d4;
}
.reset {
  padding: 0 12px;
  border-right: 1px solid #d4d4d4;
}
.note {
  margin-left: auto;
  color: #b4b4b4;
  font-weight: 600;
}
.spotbar .num {
  margin: 0 6px;
  color: #1170aa;
}
.unit {
  margin-right: 10px;
}
.gear {
  gap: 5px;
  width: 44px;
  border-left: 1px solid #d4d4d4;
}
.spotbar .gear {
  width: 45px;
}
.groupbar {
  display: flex;
  align-items: center;
  flex: none;
  height: 32px;
  padding-left: 10px;
  border-bottom: 1px solid #d4d4d4;
  background: #f7f7f7;
  color: #111;
  font-size: 9px;
}
.gridarea {
  display: flex;
  flex: 1;
  min-height: 0;
  padding-left: 1px;
}
.gridmain {
  display: flex;
  flex-direction: column;
  flex: 1;
  min-width: 0;
}
.gridclip {
  flex: 1;
  min-height: 0;
  overflow: hidden;
}
table.spots,
table.hist {
  width: 100%;
  table-layout: fixed;
  border-collapse: separate;
  border-spacing: 0;
}
.spots th,
.spots td,
.hist th,
.hist td {
  padding: 2px 5px 0;
  text-align: left;
  white-space: nowrap;
  overflow: hidden;
  text-overflow: clip;
}
.c5 { width: 5px; }
.c19 { width: 19px; }
.c20 { width: 20px; }
.c30 { width: 30px; }
.c40 { width: 40px; }
.c46 { width: 46px; }
.c50 { width: 50px; }
.c65 { width: 65px; }
.c75 { width: 75px; }
.c84 { width: 84px; }
.c85 { width: 85px; }
.c100 { width: 100px; }
.c120 { width: 120px; }
.spots th {
  height: 35px;
  border-bottom: 1px solid #d0d0d0;
}
.sorted {
  position: relative;
  background: #f4f4f4;
}
th small {
  position: absolute;
  top: 1px;
  right: 3px;
  display: flex;
  align-items: center;
  gap: 2px;
  font-size: 8px;
  line-height: 9px;
  font-weight: 400;
}
th small i {
  border: 3px solid transparent;
  border-top: 0;
  border-bottom: 3px solid #404040;
}
.spots .r,
.hist .r {
  text-align: right;
}
.spots tbody td {
  height: 25px;
  border-bottom: 1px solid #dcdcdc;
  background: #efefef;
}
.spots tbody .r {
  padding-right: 7px;
}
.spots td.last {
  padding: 2px 0 0 7px;
}
.spots tbody .wc {
  padding-left: 9px;
}
.spots tbody .green {
  background: #4bab4e;
}
.spots tbody .yellow {
  background: #ffd727;
}
.spots tfoot td {
  position: sticky;
  bottom: 0;
  height: 27px;
  border-top: 1px solid #888;
  background: #efefef;
  color: #111;
}
.spots tfoot .r {
  padding-right: 4px;
}
.gridside {
  display: flex;
  flex-direction: column;
  width: 21px;
  padding: 3px 1px 0 4px;
}
.gridside .vbar {
  flex: 1;
}
.gridthumb {
  height: 16px;
  margin-top: 23px;
}
.corner {
  height: 21px;
  margin: 0 0 1px -4px;
  background: #efefef;
}
.spotthumb {
  width: 36%;
}

.histpanel {
  flex: none;
  border: 1px solid #c4c4c4;
  border-bottom: 0;
  background: #fff;
}
.histbar {
  display: flex;
  align-items: center;
  height: 35px;
  border-bottom: 1px solid #d0d0d0;
}
.histbar h3 {
  flex: 1;
  margin-left: 10px;
  font-size: 11px;
  font-weight: 600;
}
.histbar b {
  margin-left: 2px;
  color: #1170aa;
}
.op {
  margin: 0 10px;
}
.histbar .gear {
  height: 34px;
  margin-left: 9px;
}
.collapse {
  align-self: flex-start;
  width: 38px;
  height: 35px;
  margin: -1px -2px 0 0;
  border: 2px solid #f00000;
}
.strip {
  height: 6px;
  border-bottom: 1px solid #d4d4d4;
  background: #f7f7f7;
}
table.hist {
  padding-left: 1px;
}
.hist th {
  height: 25px;
  border-bottom: 1px solid #d0d0d0;
}
.hist td {
  height: 20px;
  border-bottom: 1px solid #dcdcdc;
  color: #111;
}
.hist td.r {
  padding-right: 7px;
}
.hist th.c {
  padding-right: 8px;
  text-align: center;
}
.hist th.peak {
  padding: 2px 0 0 11px;
}
.tarps span {
  display: inline-block;
  width: 40px;
  margin-right: 8px;
  text-align: right;
}
.tarps i {
  display: inline-block;
  height: 10px;
  background: #4bab4e;
  vertical-align: middle;
}
.histthumb {
  width: 86%;
}

/* detail pane */
.detail {
  display: flex;
  flex-direction: column;
  flex: none;
  width: 300px;
  margin-bottom: 9px;
  border: 1px solid #b8b8b8;
  border-right: 0;
  background: #f7f7f7;
}
.dhead {
  flex: none;
  background: #fff;
  border-bottom: 1px solid #c4c4c4;
}
.hidedetail {
  gap: 12px;
  width: 119px;
  height: 35px;
  margin: -1px 0 0 auto;
  padding-right: 6px;
  border: 2px solid #f00000;
  color: #606060;
  font-size: 9px;
  font-weight: 600;
}
.hidedetail svg {
  color: #303030;
}
.dhead h2 {
  padding: 1px 0 4px 9px;
  font-size: 17px;
  line-height: 25px;
  font-weight: 600;
}
.dscroll {
  display: flex;
  flex: 1;
  min-height: 0;
  overflow: hidden;
}
.dbody {
  flex: 1;
  min-width: 0;
  margin-top: -8px;
  padding: 0 15px 0 10px;
}
.slot {
  display: flex;
  white-space: nowrap;
  overflow: hidden;
}
.slot span {
  flex: none;
  width: 85px;
}
.dbody h3 {
  margin-top: 15px;
  color: #222;
  font-size: 13px;
  line-height: 18px;
  font-weight: 600;
}
.ratings {
  width: 100%;
  table-layout: fixed;
  border-collapse: separate;
  border-spacing: 0;
}
.ratings th {
  height: 27px;
  padding: 0;
  font-weight: 400;
  text-align: left;
}
.ratings .r {
  text-align: right;
}
.ratings th.r {
  padding-right: 4px;
}
.ratings th:first-child {
  width: 138px;
}
.ratings th:nth-child(2) {
  width: 50px;
}
.ratings td {
  height: 28px;
  padding: 0 4px;
  border-top: 1px solid #c8c8c8;
  border-bottom: 1px solid #c8c8c8;
  background: #fff;
}
.ratings td:first-child {
  border-left: 1px solid #c8c8c8;
  color: #111;
}
.ratings td:last-child {
  border-right: 1px solid #c8c8c8;
}
.ratings td:nth-child(2) {
  padding: 0;
}
.blue {
  display: block;
  padding-right: 3px;
  border-left: 1px solid #c8c8c8;
  border-right: 1px solid #c8c8c8;
  color: #1a56b8;
  line-height: 20px;
}
.field {
  display: flex;
  align-items: center;
  height: 30px;
}
.ratings + .field {
  margin-top: 7px;
}
.field label {
  flex: none;
  width: 85px;
  white-space: nowrap;
}
.field input,
.field .pick {
  width: 115px;
}
.field input {
  height: 25px;
  padding: 0 6px;
  border: 1px solid #d0d0d0;
  border-radius: 0;
  background: #f0f0f0;
  color: #111;
}
.field input.num {
  padding-right: 5px;
  text-align: right;
}
.field input.edit {
  border-color: #a8a8a8;
  background: #fff;
}
.field .pick select {
  padding: 0 6px;
  background: #dcdcdc;
  border-color: #a8a8a8;
  color: #707070;
  opacity: 1;
}
.dbody h3.sd {
  margin: 14px 0 4px;
}
.dbody h3.sp {
  margin-top: 13px;
}
.dscroll .vbar {
  margin: 4px 1px 2px 0;
}
.detailthumb {
  height: 54%;
  margin-top: 45px;
}
</style>
